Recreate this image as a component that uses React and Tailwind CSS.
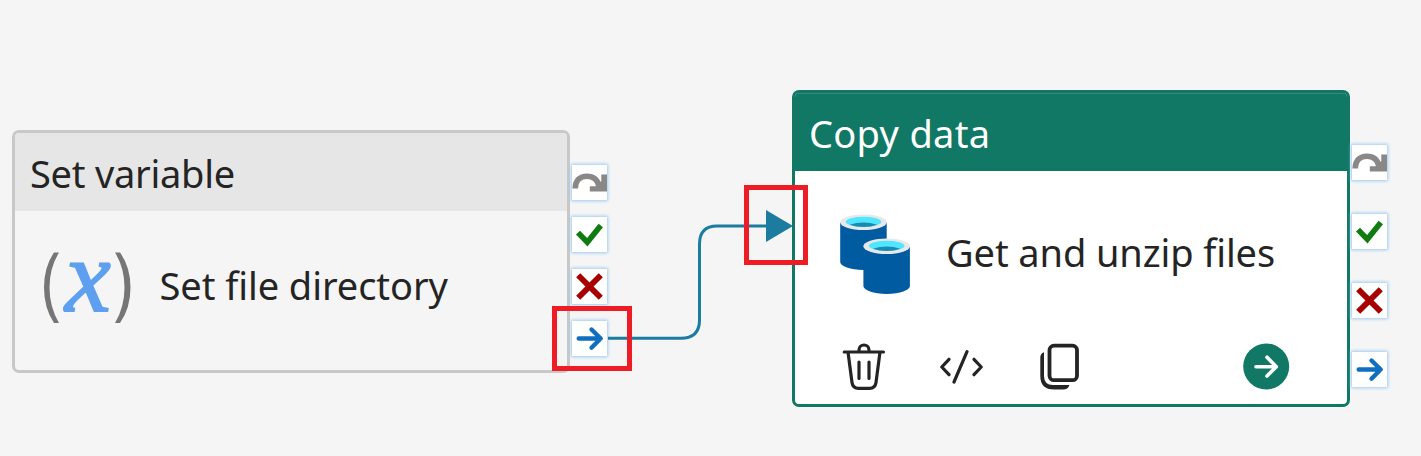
import React from "react";

const label = "font-['Noto_Sans','Open_Sans',sans-serif] text-[38px] leading-[52px] whitespace-nowrap";

function SkipIcon() {
  return (
    <svg viewBox="0 0 35 35" className="block size-[35px]">
      <path d="M3.200 23.500C3.200 15.500 8 11.200 15 11.200S25.500 14.500 27 21" fill="none" stroke="#8a8886" strokeWidth="5.600" />
      <path d="M35 9.500V26.600H17.800V21.200H23.500L29.300 16V9.500Z" fill="#8a8886" />
    </svg>
  );
}

function CheckIcon() {
  return (
    <svg viewBox="0 0 35 35" className="block size-[35px]" fill="none" stroke="#107c10" strokeWidth="5.600">
      <path d="M6 15.600L15.300 25.200L28.800 8.500" />
    </svg>
  );
}

function CrossIcon() {
  return (
    <svg viewBox="0 0 35 35" className="block size-[35px]" fill="none" stroke="#a80000" strokeWidth="5.800">
      <path d="M6.200 6.200L28.800 28.800M28.800 6.200L6.200 28.800" />
    </svg>
  );
}

function ArrowIcon() {
  return (
    <svg viewBox="0 0 35 35" className="block size-[35px]" fill="none" stroke="#106ebe" strokeWidth="4.400" strokeLinecap="round" strokeLinejoin="round">
      <path d="M6.700 17.500H28.500M19.500 8.500L28.700 17.500L19.500 26.700" />
    </svg>
  );
}

function Ports({ className }) {
  return (
    <div className={"flex flex-col " + className}>
      {[SkipIcon, CheckIcon, CrossIcon, ArrowIcon].map((Icon, i) => (
        <div key={i} className="size-[35px] shrink-0 bg-white shadow-[0_0_3px_1px_#9ccbf3]">
          <Icon />
        </div>
      ))}
    </div>
  );
}

function VariableIcon() {
  return (
    <svg viewBox="0 0 90 74" className="block h-[74px] w-[90px] shrink-0 overflow-visible">
      <g fill="#767676">
        <path d="M11 2.500H16Q6.500 18 6.500 37.500Q6.500 57 16 73H11Q1 58 1 37.500Q1 17 11 2.500Z" />
        <path d="M77 2.500H72Q81.500 18 81.500 37.500Q81.500 57 72 73H77Q87.500 58 87.500 37.500Q87.500 17 77 2.500Z" />
      </g>
      <text x="22" y="60.500" fontSize="103" fontFamily="Liberation Serif, serif" fontStyle="italic" fill="#5ea0ef" stroke="#5ea0ef" strokeWidth="1.800">x</text>
    </svg>
  );
}

function Cylinder({ x, y }) {
  return (
    <g transform={`translate(${x} ${y})`}>
      <path d="M0 8V47.500C0 51.500 10 55.500 23.300 55.500S46.500 51.500 46.500 47.500V8Z" fill="#005ba1" />
      <ellipse cx="23.300" cy="7.800" rx="23.300" ry="7.800" fill="#e8e8e8" />
      <ellipse cx="23.300" cy="7.300" rx="17.800" ry="5.100" fill="#50e6ff" />
      <path d="M9.500 10.300Q23.300 5.500 37 10.300Q31 12.500 23.300 12.500T9.500 10.300Z" fill="#198ab3" />
    </g>
  );
}

function DatabasesIcon() {
  return (
    <svg viewBox="0 0 72 82" className="block h-[82px] w-[72px] shrink-0">
      <Cylinder x={0.2} y={1.5} />
      <Cylinder x={23.4} y={25.5} />
    </svg>
  );
}

function TrashIcon() {
  return (
    <svg viewBox="0 0 44 48" className="block h-12 w-11" fill="none" stroke="#242424" strokeWidth="3.200" strokeLinecap="round" strokeLinejoin="round">
      <path d="M2.200 10H41.500M17 10V8a5 5 0 0 1 10 0V10M6 10L10 40.500Q10.800 46.300 16.500 46.300H27.500Q33.200 46.300 34 40.500L38 10" />
      <path d="M17 20V36.500M27 20V36.500" />
    </svg>
  );
}

function CodeIcon() {
  return (
    <svg viewBox="0 0 44 48" className="block h-12 w-11" fill="none" stroke="#242424" strokeWidth="3.200" strokeLinecap="round" strokeLinejoin="round">
      <path d="M9 17.300L1.800 25L9 32.700M27 9.700L14 40M34 17.300L41.200 25L34 32.700" />
    </svg>
  );
}

function CopyIcon() {
  return (
    <svg viewBox="0 0 44 48" className="block h-12 w-11">
      <rect x="9.500" y="3.700" width="27.500" height="34.500" rx="4.500" fill="none" stroke="#242424" strokeWidth="3.800" />
      <path d="M4 10.200V34Q4 43 13 43H29.500Q28 47.500 23 47.500H14Q0.300 47.500 0.300 34V15.500Q0.300 11.500 4 10.200Z" fill="#242424" />
    </svg>
  );
}

function RunIcon() {
  return (
    <svg viewBox="0 0 47 47" className="block size-[47px]">
      <circle cx="23.200" cy="23.500" r="23" fill="#117865" />
      <path d="M13 23.700H33M24 14.200L33.300 23.700L24 33" fill="none" stroke="#fff" strokeWidth="3.600" strokeLinecap="round" strokeLinejoin="round" />
    </svg>
  );
}

export default function App() {
  return (
    <main className="relative h-[456px] w-[1421px] overflow-hidden bg-[#f5f5f5] text-[#242424]">
      <section className="absolute left-[12px] top-[130px] flex items-start gap-[2px]">
        <div className="flex h-[243px] w-[558px] flex-col overflow-hidden rounded-[7px] border-[3px] border-[#c8c8c8]">
          <header className="flex h-[78px] shrink-0 items-center bg-[#e6e6e6] pl-[15px] pt-px">
            <span className={label + " tracking-[-0.25px]"}>Set variable</span>
          </header>
          <div className="flex pl-[28px] pt-[39px]">
            <VariableIcon />
            <span className={label + " ml-[26.500px] mt-[9px] tracking-[-0.060px]"}>Set file directory</span>
          </div>
        </div>
        <Ports className="mt-[35px] gap-[17px]" />
      </section>

      <section className="absolute left-[792px] top-[90px] flex items-start gap-[2px]">
        <div className="flex h-[317px] w-[558px] flex-col overflow-hidden rounded-[7px] border-[3px] border-[#117865] bg-white">
          <header className="flex h-[78px] shrink-0 items-center border-t border-[#30897a] bg-[#117865] pl-[14px] text-white">
            <span className={label + " tracking-[0.3px]"}>Copy data</span>
          </header>
          <div className="flex pl-[45px] pt-[42px]">
            <DatabasesIcon />
            <span className={label + " ml-[34px] mt-[13px] tracking-[-0.100px]"}>Get and unzip files</span>
          </div>
          <footer className="mt-[47px] flex items-start pl-[47px]">
            <TrashIcon />
            <div className="ml-[54px]"><CodeIcon /></div>
            <div className="ml-[56px]"><CopyIcon /></div>
            <div className="ml-[159px] mt-px"><RunIcon /></div>
          </footer>
        </div>
        <Ports className="mt-[55px] gap-[34px]" />
      </section>

      <svg viewBox="0 0 1421 456" className="absolute left-0 top-0 h-[456px] w-[1421px]" fill="none">
        <path d="M608 338.200H681Q699.500 338.200 699.500 320V244Q699.500 226 717 226H767" stroke="#1b7ca0" strokeWidth="3" />
        <path d="M766 210V242L793 226Z" fill="#1b7ca0" />
      </svg>
      <div className="absolute left-[552px] top-[306px] h-[65px] w-[80px] border-[5px] border-[#ee1c25]" />
      <div className="absolute left-[744px] top-[185px] h-[80px] w-[64px] border-[5px] border-[#ee1c25]" />
    </main>
  );
}
